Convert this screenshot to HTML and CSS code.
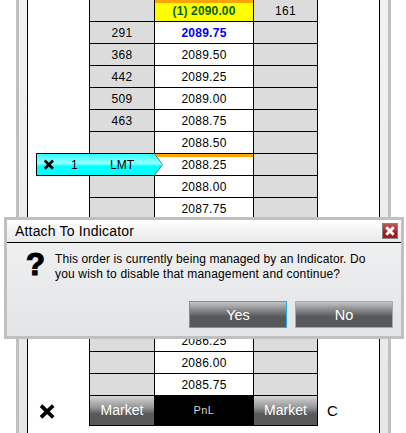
FILE: index.html
```html
<!DOCTYPE html>
<html lang="en">
<head>
<meta charset="utf-8">
<title>Attach To Indicator</title>
<link rel="stylesheet" href="styles.css">
</head>
<body>
<div class="window">
  <div class="panel">
    <div class="ladder">
      <div class="col bids">
        <div class="cell first"></div><div class="cell">291</div><div class="cell">368</div><div class="cell">442</div><div class="cell">509</div><div class="cell">463</div><div class="cell"></div><div class="cell"></div><div class="cell"></div><div class="cell"></div><div class="cell"></div><div class="cell"></div><div class="cell"></div><div class="cell"></div><div class="cell"></div><div class="cell"></div><div class="cell"></div><div class="cell"></div>
        <div class="market"><span>Market</span></div>
      </div>
      <div class="col prices">
        <div class="cell first last-trade"><b>(1) 2090.00</b></div><div class="cell current"><b>2089.75</b></div><div class="cell">2089.50</div><div class="cell">2089.25</div><div class="cell">2089.00</div><div class="cell">2088.75</div><div class="cell">2088.50</div><div class="cell marked">2088.25</div><div class="cell">2088.00</div><div class="cell">2087.75</div><div class="cell"></div><div class="cell"></div><div class="cell"></div><div class="cell"></div><div class="cell"></div><div class="cell">2086.25</div><div class="cell">2086.00</div><div class="cell">2085.75</div>
        <div class="pnl">PnL</div>
      </div>
      <div class="col asks">
        <div class="cell first">161</div><div class="cell"></div><div class="cell"></div><div class="cell"></div><div class="cell"></div><div class="cell"></div><div class="cell"></div><div class="cell"></div><div class="cell"></div><div class="cell"></div><div class="cell"></div><div class="cell"></div><div class="cell"></div><div class="cell"></div><div class="cell"></div><div class="cell"></div><div class="cell"></div><div class="cell"></div>
        <div class="market"><span>Market</span></div>
      </div>
    </div>
  </div>
</div>

<svg class="cancel-all" width="16" height="15" viewBox="0 0 16 15"><path d="M2 1.600 L14.200 13.400 M14.200 1.600 L2 13.400" stroke="#000" stroke-width="3.700" fill="none"/></svg>
<div class="center-key">C</div>

<div class="order">
  <svg class="order-shape" width="128" height="23" viewBox="0 0 128 23">
    <defs><linearGradient id="cyan" x1="0" y1="0" x2="0" y2="1">
      <stop offset="0" stop-color="#2ff"/><stop offset=".12" stop-color="#4ff"/><stop offset=".45" stop-color="#9ff"/><stop offset=".52" stop-color="#4ff"/><stop offset=".58" stop-color="#0ff"/><stop offset="1" stop-color="#0ff"/>
    </linearGradient></defs>
    <path d="M0 0H118.500L127 11.500L118.500 23H0Z" fill="url(#cyan)"/>
    <path d="M118.500 .5H.5V22.500H118.500" fill="none" stroke="#000"/>
    <path d="M118.500 1L126.500 11.500L118.500 22" fill="none" stroke="#6b7f84"/>
    <path d="M8.700 7.500L17 15.800M17 7.500L8.700 15.800" stroke="#000" stroke-width="2.700"/>
  </svg>
  <span class="order-qty">1</span><span class="order-type">LMT</span>
</div>

<div class="dialog">
  <div class="title"><span>Attach To Indicator</span>
    <svg class="close" width="16" height="16" viewBox="0 0 16 16">
      <defs><linearGradient id="red" x1="0" y1="0" x2="0" y2="1"><stop offset="0" stop-color="#b95b5b"/><stop offset=".5" stop-color="#ad3030"/><stop offset=".55" stop-color="#a51414"/><stop offset="1" stop-color="#a91c1c"/></linearGradient></defs>
      <rect x=".5" y=".5" width="15" height="15" fill="url(#red)" stroke="#858585"/>
      <path d="M4.300 4.300L11.700 11.700M11.700 4.300L4.300 11.700" stroke="#fff" stroke-width="3"/>
    </svg>
  </div>
  <div class="content">
    <div class="question">?</div>
    <div class="message"><div class="l1">This order is currently being managed by an Indicator. Do</div><div class="l2">you wish to disable that management and continue?</div></div>
  </div>
  <div class="actions"><button class="yes">Yes</button><button>No</button></div>
</div>
</body>
</html>
```

FILE: styles.css
```css
* { box-sizing: border-box; }
body {
  margin: 0;
  width: 406px;
  height: 433px;
  overflow: hidden;
  position: relative;
  background: #fff;
  color: #000;
  font: 12px/15px "Liberation Sans", Arial, sans-serif;
}
.window {
  width: 375px;
  height: 433px;
  margin-left: 16px;
  padding: 0 8px;
  border: solid #c0c0c0;
  border-width: 0 3px;
  background: linear-gradient(#f1f2f2, #e6e7e8);
}
.panel {
  height: 433px;
  padding-left: 61px;
  border: solid #000;
  border-width: 0 1px;
  background: #fff;
}
.ladder {
  display: grid;
  grid-template-columns: 65px 99px 64px;
  width: 229px;
  height: 426px;
  border: solid #000;
  border-width: 0 1px 1px 0;
}
.col { border-left: 1px solid #000; }
.cell {
  height: 22px;
  border-bottom: 1px solid #000;
  text-align: center;
  line-height: 22px;
  letter-spacing: .25px;
}
.bids .cell, .asks .cell { background: #dcdcdc; }
.last-trade {
  background: #ff0;
  color: #006400;
  border-top: 3px solid #ffa500;
  line-height: 16px;
}
.last-trade b { letter-spacing: .15px; }
.current { color: #00f; }
.marked { border-top: 3px solid #ffa500; line-height: 16px; }
.market, .pnl {
  height: 29px;
  display: flex;
  align-items: center;
  justify-content: center;
}
.market {
  background: linear-gradient(#d6d6d6, #949596 40%, #58595b 62%, #58595b);
  color: #fff;
  font-size: 14px;
}
.pnl { background: #000; color: #d3d3d3; font-size: 11px; letter-spacing: .4px; }
.cancel-all { position: absolute; left: 39px; top: 404px; }
.center-key { position: absolute; left: 327px; top: 403px; font-size: 15px; line-height: 16px; }
.order { position: absolute; left: 36px; top: 153px; width: 128px; height: 23px; line-height: 23px; }
.order-shape { display: block; }
.order-qty { position: absolute; left: 35px; top: 1px; }
.order-type { position: absolute; left: 74px; top: 1px; }
.dialog {
  position: absolute;
  left: 4px;
  top: 217px;
  width: 400px;
  height: 122px;
  border: 3px solid #c0c0c0;
  background: linear-gradient(#f1f2f2, #e3e4e6);
}
.title {
  height: 23px;
  padding: 0 3px 0 8px;
  display: flex;
  align-items: center;
  justify-content: space-between;
  border-bottom: 1px solid #000;
  background: linear-gradient(#fff, #e8e9ea);
  font-size: 14px;
  letter-spacing: .18px;
}
.content { display: flex; height: 58px; padding: 9px 0 0 19px; }
.question {
  width: 29px;
  height: 30px;
  margin-top: -3px;
  font: 900 31px/32px "Liberation Sans", Arial, sans-serif;
  -webkit-text-stroke: 1.2px #000;
}
.message { white-space: nowrap; }
.l1 { letter-spacing: .1px; }
.l2 { letter-spacing: .17px; }
.actions { display: flex; justify-content: flex-end; gap: 8px; padding-right: 8px; }
.actions button {
  width: 98px;
  height: 27px;
  padding: 0;
  border: 1px solid #a7a9ac;
  border-radius: 0;
  background: linear-gradient(#c4c4c4, #8b8c8d 30%, #58595b 58%, #58595b);
  color: #fff;
  font: 14.5px "Liberation Sans", Arial, sans-serif;
}
.actions .yes { border-color: #19b5e5; }
```
